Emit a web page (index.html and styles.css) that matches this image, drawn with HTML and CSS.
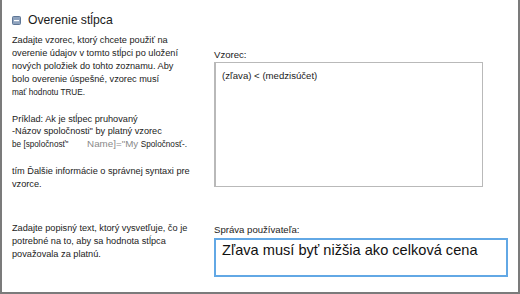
FILE: index.html
```html
<!DOCTYPE html>
<html lang="sk">
<head>
<meta charset="utf-8">
<link rel="stylesheet" href="styles.css">
</head>
<body>
<div class="frame">
  <div class="left">
    <div class="title">
      <svg class="icon" width="9" height="9" viewBox="0 0 9 9"><rect x="0.5" y="0.5" width="8" height="8" rx="1" fill="#8ea2bd" stroke="#5f7796"/><rect x="2" y="4" width="5" height="1.2" fill="#fff"/></svg>
      <span>Overenie stĺpca</span>
    </div>
    <p class="para p1">Zadajte vzorec, ktorý chcete použiť na<br>overenie údajov v tomto stĺpci po uložení<br>nových položiek do tohto zoznamu. Aby<br>bolo overenie úspešné, vzorec musí<br><span class="small">mať hodnotu TRUE.</span></p>
    <p class="para p2">Príklad: Ak je stĺpec pruhovaný<br>-Názov spoločnosti" by platný vzorec<br><span class="small">be [spoločnosť"</span> <span class="gap"></span><span class="grey">Name]="My</span> <span class="small">Spoločnosť-.</span></p>
    <p class="para p3">tím Ďalšie informácie o správnej syntaxi pre<br>vzorce.</p>
    <p class="para p4">Zadajte popisný text, ktorý vysvetľuje, čo je<br>potrebné na to, aby sa hodnota stĺpca<br>považovala za platnú.</p>
  </div>
  <div class="right">
    <div class="label l1">Vzorec:</div>
    <div class="textarea">(zľava) &lt; (medzisúčet)</div>
    <div class="label l2">Správa používateľa:</div>
    <div class="input">Zľava musí byť nižšia ako celková cena</div>
  </div>
</div>
</body>
</html>
```
FILE: styles.css
```css
html, body { margin: 0; padding: 0; background: #fff; }
.frame {
  box-sizing: border-box;
  width: 520px;
  height: 294px;
  border-left: 2px solid #7b7b7b;
  border-right: 2px solid #7b7b7b;
  border-bottom: 2px solid #7b7b7b;
  display: flex;
  font-family: "Liberation Sans", Arial, sans-serif;
  color: #222;
}
.left {
  width: 201px;
  padding-left: 10px;
  padding-top: 11px;
  box-sizing: border-box;
}
.title {
  display: flex;
  align-items: center;
  gap: 7px;
  font-size: 12.2px;
  height: 18px;
  color: #1a1a1a;
}
.icon { display: block; }
.para {
  margin: 0;
  font-size: 9.2px;
  line-height: 12.9px;
  white-space: nowrap;
}
.p1 { margin-top: 5px; }
.small { font-size: 8.2px; }
.grey { color: #8a8a8a; font-size: 9.8px; }
.gap { display: inline-block; width: 16px; }
.p2 { margin-top: 13px; }
.p3 { margin-top: 13px; }
.p4 { margin-top: 31px; }
.right {
  padding-top: 49px;
  box-sizing: border-box;
  flex: 1;
  padding-left: 11px;
}
.label { font-size: 9.6px; line-height: 12px; }
.textarea {
  margin-top: 1px;
  width: 269px;
  height: 125px;
  box-sizing: border-box;
  border: 1px solid #b9b9b9;
  border-left-width: 2px;
  padding: 7px 6px;
  font-size: 9.6px;
  line-height: 12px;
}
.l2 { margin-top: 37px; }
.input {
  margin-top: 2px;
  width: 294px;
  height: 39px;
  box-sizing: border-box;
  border: 2px solid #62a8e5;
  padding: 1px 6px;
  font-size: 14.6px;
  line-height: 19px;
  color: #111;
}
```
